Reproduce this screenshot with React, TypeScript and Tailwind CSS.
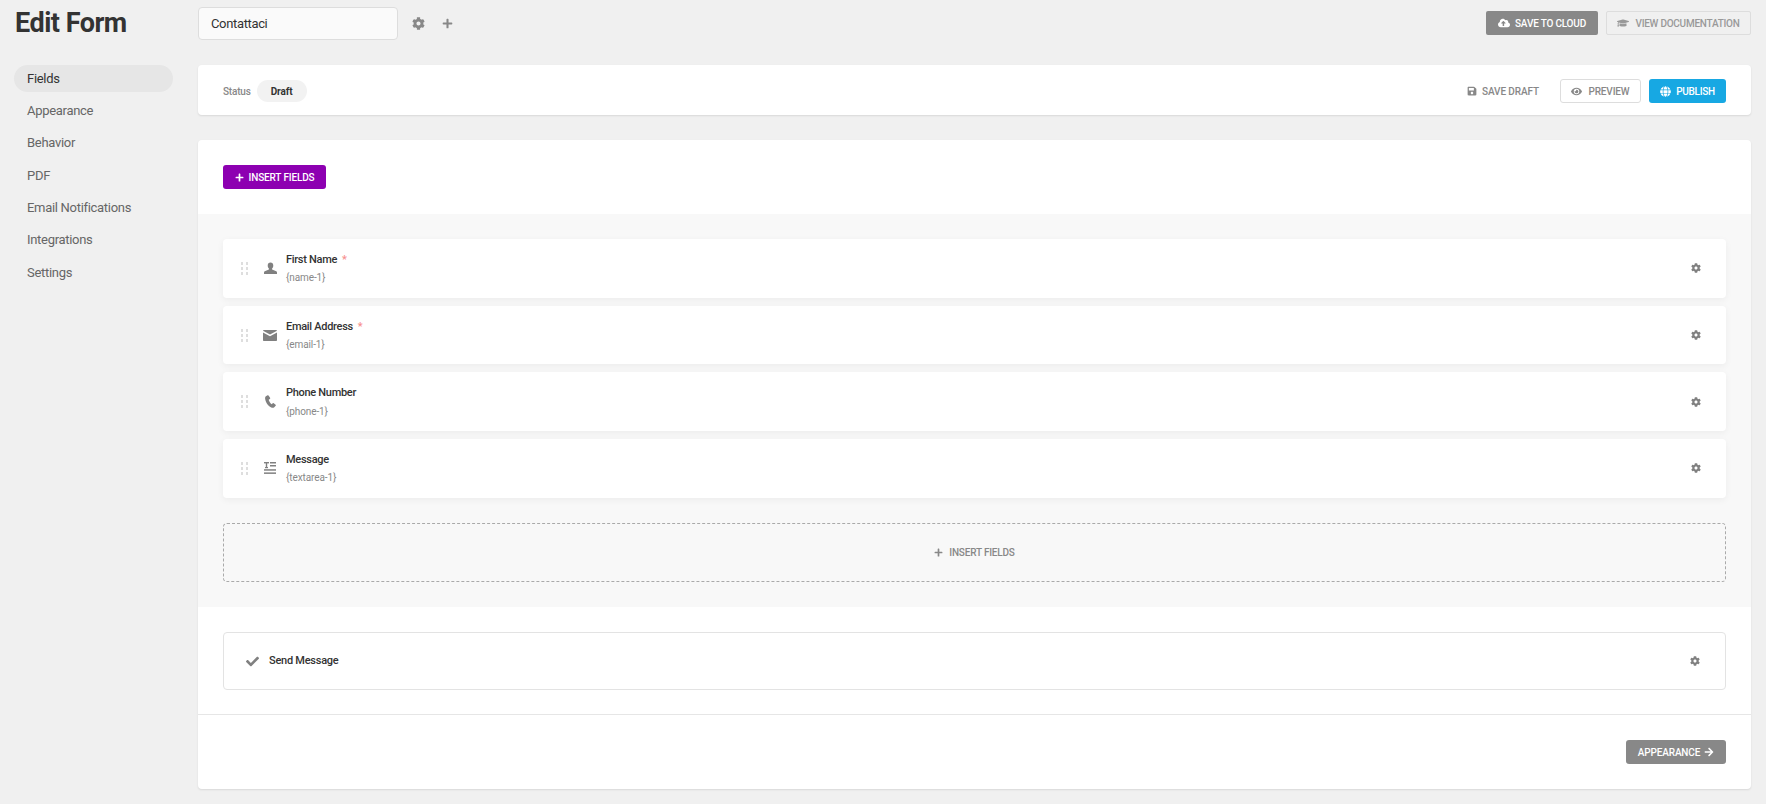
import { FaArrowRight, FaCheck, FaCloudUploadAlt, FaCog, FaEye, FaGlobe, FaGraduationCap, FaPlus, FaSave } from "react-icons/fa";
import type { ReactNode } from "react";

const menu = ["Fields", "Appearance", "Behavior", "PDF", "Email Notifications", "Integrations", "Settings"];

const UserIcon = () => (
  <svg viewBox="0 0 14 14" className="w-[13px] h-[13px] fill-[#808080]">
    <path d="M7 0.5c-1.9 0-3 1.4-3 3.2 0 1.3.5 2.5 1.3 3.2v1.2L0.8 10c-.5.3-.8.7-.8 1.2V13h14v-1.800c0-.5-.3-.9-.8-1.200L8.700 8.100V6.900C9.500 6.200 10 5 10 3.700 10 1.900 8.900.5 7 .5z" />
  </svg>
);

const MailIcon = () => (
  <svg viewBox="0 0 14 11" className="w-[14px] h-[11px] fill-[#808080]">
    <path d="M1 0h12c.6 0 1 .3 1 .8L7 4.600 0 .8C0 .3.400 0 1 0z" />
    <path d="M0 2.500l7 3.800 7-3.800V10c0 .6-.4 1-1 1H1c-.6 0-1-.4-1-1z" />
  </svg>
);

const PhoneIcon = () => (
  <svg viewBox="0 0 12 14" className="w-[11px] h-[13px] fill-[#808080]">
    <path d="M2.800 0.300L1 1.300C.1 2 0 3 .2 4.300c.5 3.600 3.200 7.700 6.600 9.200 1.300.5 2.500.5 3.300-.3l1.500-1.500c.4-.4.400-.8 0-1.100L9.500 8.800c-.4-.2-.8-.2-1.100.1l-1 1c-1.600-1-2.900-3-3.400-4.900l1.300-.7c.4-.2.500-.6.400-1L4.100.8C3.900.2 3.300 0 2.800.3z" />
  </svg>
);

const TextareaIcon = () => (
  <svg viewBox="0 0 12 12" className="w-[12px] h-[12px] fill-[#808080]">
    <rect x="0" y="0" width="5" height="1.400" />
    <rect x="1.800" y="0" width="1.400" height="6" />
    <rect x="1" y="5" width="3" height="1.200" />
    <rect x="6" y="0" width="6" height="1.500" />
    <rect x="6" y="3" width="6" height="1.500" />
    <rect x="0" y="7.200" width="12" height="1.500" />
    <rect x="0" y="10.400" width="12" height="1.500" />
  </svg>
);

const Grip = () => (
  <div className="grid grid-cols-2 gap-x-[3px] gap-y-[2px] w-[7px] shrink-0">
    {[0, 1, 2, 3, 4, 5].map((n) => (
      <span key={n} className="w-[2px] h-[3px] bg-[#dedede]" />
    ))}
  </div>
);

const fields: { label: string; slug: string; required?: boolean; icon: ReactNode }[] = [
  { label: "First Name", slug: "{name-1}", required: true, icon: <UserIcon /> },
  { label: "Email Address", slug: "{email-1}", required: true, icon: <MailIcon /> },
  { label: "Phone Number", slug: "{phone-1}", icon: <PhoneIcon /> },
  { label: "Message", slug: "{textarea-1}", icon: <TextareaIcon /> },
];

export default function App() {
  return (
    <div className="min-h-[804px] bg-[#f0f0f0] flex font-['Roboto',sans-serif] text-[#333333]">
      <aside className="w-[198px] shrink-0 pl-[14px] pr-[25px]">
        <h1 className="h-[65px] pl-px pt-[4px] text-[27px] leading-[38px] font-bold tracking-[-0.5px] text-[#333333]">Edit Form</h1>
        <nav className="flex flex-col">
          {menu.map((item, i) => (
            <div
              key={item}
              className={`h-[27px] mb-[5.3px] px-[13px] rounded-full flex items-center text-[13px] tracking-[-0.3px] ${
                i === 0 ? "bg-[#e6e6e6] text-[#333333]" : "text-[#666666]"
              }`}
            >
              {item}
            </div>
          ))}
        </nav>
      </aside>

      <main className="flex-1 pr-[15px]">
        <header className="h-[65px] flex items-start pt-[7px]">
          <div className="w-[200px] h-[33px] px-[12px] flex items-center text-[13px] tracking-[-0.35px] bg-[#fafafa] border border-[#dddddd] rounded-[4px]">Contattaci</div>
          <FaCog className="ml-[14px] mt-[10px] text-[13px] text-[#888888]" />
          <FaPlus className="ml-[17px] mt-[11px] text-[11px] text-[#888888]" />
          <div className="ml-auto flex items-center gap-[8px] mt-[4px]">
            <button className="h-[24px] w-[112px] flex items-center justify-center gap-[5px] rounded-[2px] bg-[#888888] text-white text-[10px] font-medium uppercase tracking-[-0.2px]">
              <FaCloudUploadAlt className="text-[12px]" />
              Save to cloud
            </button>
            <button className="h-[24px] w-[145px] flex items-center justify-center gap-[6px] rounded-[2px] border border-[#dddddd] text-[#999999] text-[10px] font-medium uppercase tracking-[-0.25px]">
              <FaGraduationCap className="text-[12px]" />
              View documentation
            </button>
          </div>
        </header>

        <section className="h-[50px] bg-white rounded-[4px] shadow-[0_1px_2px_rgba(0,0,0,0.1)] flex items-center pl-[25px] pr-[25px] pt-[2px]">
          <span className="text-[10px] font-medium text-[#888888] tracking-[-0.2px]">Status</span>
          <span className="ml-[6px] h-[22px] w-[50px] flex items-center justify-center rounded-full bg-[#f2f2f2] text-[10px] font-bold text-[#333333] tracking-[-0.1px]">Draft</span>
          <button className="ml-auto flex items-center gap-[5px] text-[10px] font-medium uppercase text-[#888888] tracking-[-0.1px]">
            <FaSave className="text-[10px]" />
            Save draft
          </button>
          <button className="ml-[21px] h-[24px] w-[81px] flex items-center justify-center gap-[6px] rounded-[3px] border border-[#dddddd] text-[10px] font-medium uppercase text-[#888888] tracking-[-0.15px]">
            <FaEye className="text-[11px]" />
            Preview
          </button>
          <button className="ml-[8px] h-[24px] w-[77px] flex items-center justify-center gap-[5px] rounded-[3px] bg-[#17a8e3] text-white text-[10px] font-medium uppercase tracking-[-0.3px]">
            <FaGlobe className="text-[11px]" />
            Publish
          </button>
        </section>

        <section className="mt-[25px] bg-white rounded-[4px] shadow-[0_1px_2px_rgba(0,0,0,0.1)]">
          <div className="h-[74px] pl-[25px] flex items-center">
            <button className="h-[24px] w-[103px] flex items-center justify-center gap-[5px] rounded-[3px] bg-[#8d00b1] text-white text-[10px] font-medium uppercase tracking-[-0.15px]">
              <FaPlus className="text-[9px]" />
              Insert fields
            </button>
          </div>

          <div className="h-[393px] bg-[#f8f8f8] px-[25px] pt-[25px]">
            <div className="flex flex-col gap-[8px]">
              {fields.map((f) => (
                <div key={f.slug} className="h-[58.7px] bg-white rounded-[4px] shadow-[0_2px_7px_rgba(0,0,0,0.05)] flex items-center pl-[18px] pr-[25px]">
                  <Grip />
                  <div className="w-[14px] ml-[15px] flex justify-center">{f.icon}</div>
                  <div className="ml-[9px] mt-[1.5px]">
                    <div className="text-[11px] leading-[16px] font-medium text-[#333333] tracking-[-0.3px]">
                      {f.label}
                      {f.required && <span className="ml-[5px] text-[#f78f8f]">*</span>}
                    </div>
                    <div className="mt-[2.5px] text-[10px] leading-[16px] text-[#888888] tracking-[-0.1px]">{f.slug}</div>
                  </div>
                  <FaCog className="ml-auto text-[10px] text-[#808080]" />
                </div>
              ))}
            </div>
            <div className="mt-[25px] h-[59px] rounded-[4px] border border-dashed border-[#aaaaaa] flex items-center justify-center gap-[6px] text-[10px] font-medium uppercase text-[#888888] tracking-[-0.2px]">
              <FaPlus className="text-[9px]" />
              Insert fields
            </div>
          </div>

          <div className="h-[108px] px-[25px] pt-[25px] border-b border-[#e6e6e6]">
            <div className="h-[58px] rounded-[4px] border border-[#e3e3e3] flex items-center pl-[22px] pr-[25px]">
              <FaCheck className="text-[13px] text-[#808080]" />
              <span className="ml-[10px] text-[11px] font-medium text-[#333333] tracking-[-0.25px]">Send Message</span>
              <FaCog className="ml-auto text-[10px] text-[#808080]" />
            </div>
          </div>

          <div className="h-[74px] pr-[25px] flex items-center justify-end">
            <button className="h-[24px] w-[100px] flex items-center justify-center gap-[4px] rounded-[3px] bg-[#888888] text-white text-[10px] font-medium uppercase tracking-[-0.15px]">
              Appearance
              <FaArrowRight className="text-[10px]" />
            </button>
          </div>
        </section>
      </main>
    </div>
  );
}
